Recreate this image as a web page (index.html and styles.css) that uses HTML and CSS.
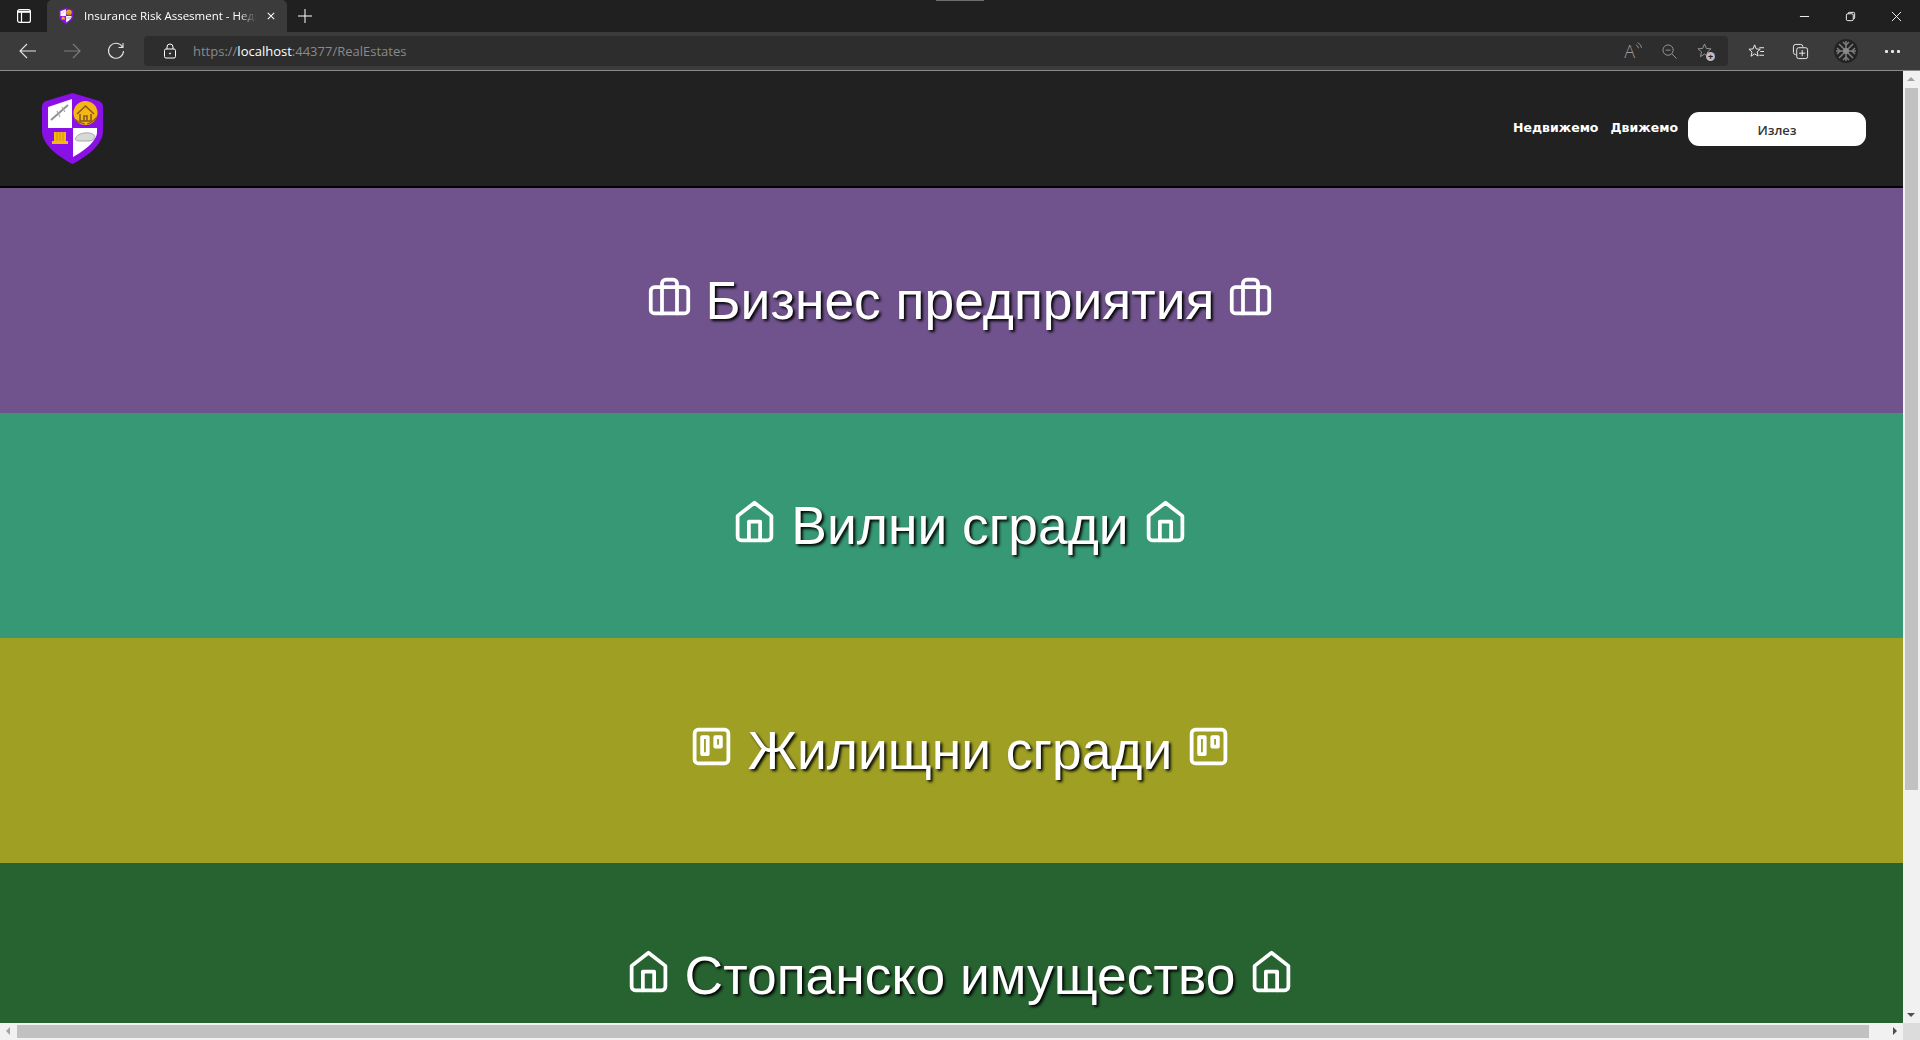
FILE: index.html
```html
<!DOCTYPE html>
<html lang="bg">
<head>
<meta charset="utf-8">
<title>Insurance Risk Assesment - Недвижимо</title>
<link rel="stylesheet" href="styles.css">
</head>
<body>
<svg class="defs" width="0" height="0" aria-hidden="true">
  <defs>
    <symbol id="i-brief" viewBox="0 0 24 24"><rect x="2" y="7" width="20" height="14" rx="2"/><path d="M16 21V5a2 2 0 0 0-2-2h-4a2 2 0 0 0-2 2v16"/></symbol>
    <symbol id="i-home" viewBox="0 0 24 24"><path d="M3 9l9-7 9 7v11a2 2 0 0 1-2 2H5a2 2 0 0 1-2-2z"/><path d="M9 22V12h6v10"/></symbol>
    <symbol id="i-trello" viewBox="0 0 24 24"><rect x="3" y="3" width="18" height="18" rx="2"/><rect x="7" y="7" width="3" height="9"/><rect x="14" y="7" width="3" height="5"/></symbol>
    <symbol id="i-shield" viewBox="0 0 61 71">
      <path d="M30.500 0 L57 8 Q61 9.500 61 14 V38 C61 52 44 64 30.500 71 C17 64 0 52 0 38 V14 Q0 9.500 4 8 Z" fill="#8a10e8"/>
      <path d="M30 6 V35 H6 V14 Z" fill="#fff"/>
      <path d="M31 35 H55 V39 C55 48 42 58 31 64 Z" fill="#fff"/>
      <circle cx="43.500" cy="20" r="12" fill="#f4b714"/>
      <path d="M35 21 L43.500 13 L52 21 M38 21 V28 H49 V21 M42 28 V23 H45 V28" fill="none" stroke="#8a5a18" stroke-width="1.600"/>
      <path d="M32 26 Q38 30 43 31 M45 31 Q50 30 55 24" fill="none" stroke="#8a5a18" stroke-width="1.200"/>
      <path d="M9 27 L26 12" stroke="#8f8f8f" stroke-width="1.800" fill="none"/>
      <path d="M15 18 L18 24 M20 14 L23 19" stroke="#aaa" stroke-width="1.200" fill="none"/>
      <path d="M12 39 H24 V48 H26 V51 H10 V48 H12 Z" fill="#f4b714"/>
      <path d="M15 39 V48 M18 39 V48 M21 39 V48" stroke="#c98f10" stroke-width=".8" fill="none"/>
      <path d="M33 46 Q35 41 42 40 Q50 39 53 43 Q53 47 48 48 H37 Q34 48 33 46 Z" fill="#d8d8d8" stroke="#9a9a9a" stroke-width=".8"/>
    </symbol>
  </defs>
</svg>
<div class="browser">
  <div class="tabstrip">
    <svg class="tab-panel" viewBox="0 0 14 14"><rect x=".6" y=".6" width="12.800" height="12.800" rx="2"/><path class="tab-panel-bar" d="M.6 2.800h12.800"/><path d="M4.500 3.500v10"/></svg>
    <div class="tab">
      <svg class="favicon"><use href="#i-shield"/></svg>
      <span class="tab-title">Insurance Risk Assesment - Недв</span>
      <svg class="tab-close" viewBox="0 0 10 10"><path d="M1 1l8 8M9 1l-8 8"/></svg>
    </div>
    <svg class="tab-new" viewBox="0 0 14 14"><path d="M7 0v14M0 7h14"/></svg>
    <div class="drag-mark"></div>
    <div class="window-btns">
      <svg class="win-icon" viewBox="0 0 12 12"><path d="M1 6h10"/></svg>
      <svg class="win-icon" viewBox="0 0 12 12"><rect x="1.500" y="3" width="7.500" height="7.500" rx="1.500"/><path d="M3.500 3V2.500a1 1 0 0 1 1-1h5a1 1 0 0 1 1 1v5a1 1 0 0 1-1 1H9"/></svg>
      <svg class="win-icon" viewBox="0 0 12 12"><path d="M1 1l10 10M11 1L1 11"/></svg>
    </div>
  </div>
  <div class="toolbar">
    <svg class="nav-icon" viewBox="0 0 18 18"><path d="M17 9H1M8 2L1 9l7 7"/></svg>
    <svg class="nav-icon nav-off" viewBox="0 0 18 18"><path d="M1 9h16M10 2l7 7-7 7"/></svg>
    <svg class="nav-icon" viewBox="0 0 18 18"><path d="M15.500 5A7.500 7.500 0 1 0 16.500 9M16 1v4.500h-4.500"/></svg>
    <div class="address">
      <svg class="lock" viewBox="0 0 14 16"><rect x="1.500" y="6" width="11" height="9" rx="1.500"/><path d="M4 6V4a3 3 0 0 1 6 0v2"/><circle cx="7" cy="10.500" r="0.600"/></svg>
      <span class="url"><span class="dim">https://</span>localhost<span class="dim">:44377/RealEstates</span></span>
      <div class="addr-tools">
        <span class="read-a">A<svg class="waves" viewBox="0 0 8 10"><path d="M1 3q2.500 1 3 4M3 .5q4 2 4.500 6"/></svg></span>
        <svg class="addr-icon" viewBox="0 0 16 16"><circle cx="6.500" cy="6.500" r="5.500"/><path d="M4 6.500h5M10.500 10.500l5 5"/></svg>
        <span class="fav-add">
          <svg class="addr-icon" viewBox="0 0 16 16"><path d="M8 1l2 4.800 5 .4-3.800 3.300 1.100 5L8 11.800 3.700 14.500l1.100-5L1 6.200l5-.4z"/></svg>
          <span class="plus-badge">+</span>
        </span>
      </div>
    </div>
    <div class="tools">
      <svg class="tool-icon" viewBox="0 0 18 18"><path d="M7 2l1.700 4.300 4.300.3-3.300 2.800 1 4.400L7 11.500 3.200 14l1.100-4.500L1 6.600l4.300-.3zM12 5h5M13 9h4M12 13h5"/></svg>
      <svg class="tool-icon" viewBox="0 0 18 18"><path d="M4 12.500A3 3 0 0 1 1.500 10V4A2.500 2.500 0 0 1 4 1.500h5A2.500 2.500 0 0 1 11.500 4"/><rect x="5" y="5" width="11.500" height="11.500" rx="2"/><path d="M10.800 7.500v6.500M7.500 10.800H14"/></svg>
      <svg class="avatar" viewBox="0 0 24 24"><circle cx="12" cy="12" r="12" fill="#232323"/><g stroke="#7d7d7d" stroke-width="1.500" fill="none"><path d="M12 2v20M2 12h20M5 5l14 14M19 5L5 19"/><path d="M9 3l3 3 3-3M9 21l3-3 3 3M3 9l3 3-3 3M21 9l-3 3 3 3"/></g><circle cx="12" cy="12" r="3" fill="#8a8a8a"/></svg>
      <span class="more"><i></i><i></i><i></i></span>
    </div>
  </div>
  <div class="viewport">
    <div class="page-row">
      <main class="page">
        <header class="site-header">
          <svg class="logo"><use href="#i-shield"/></svg>
          <nav class="site-nav">
            <a class="nav-link">Недвижемо</a>
            <a class="nav-link">Движемо</a>
            <button class="logout">Излез</button>
          </nav>
        </header>
        <section class="band band-purple">
          <svg class="band-icon"><use href="#i-brief"/></svg>
          <h2 class="band-title">Бизнес предприятия</h2>
          <svg class="band-icon"><use href="#i-brief"/></svg>
        </section>
        <section class="band band-green">
          <svg class="band-icon"><use href="#i-home"/></svg>
          <h2 class="band-title">Вилни сгради</h2>
          <svg class="band-icon"><use href="#i-home"/></svg>
        </section>
        <section class="band band-olive">
          <svg class="band-icon"><use href="#i-trello"/></svg>
          <h2 class="band-title">Жилищни сгради</h2>
          <svg class="band-icon"><use href="#i-trello"/></svg>
        </section>
        <section class="band band-forest">
          <svg class="band-icon"><use href="#i-home"/></svg>
          <h2 class="band-title">Стопанско имущество</h2>
          <svg class="band-icon"><use href="#i-home"/></svg>
        </section>
      </main>
      <div class="vscroll">
        <span class="arrow arrow-up"></span>
        <div class="vthumb"></div>
        <span class="arrow arrow-down"></span>
      </div>
    </div>
    <div class="hscroll-row">
      <div class="hscroll">
        <span class="arrow arrow-left"></span>
        <div class="hthumb"></div>
        <span class="arrow arrow-right"></span>
      </div>
      <div class="corner"></div>
    </div>
  </div>
</div>
</body>
</html>
```

FILE: styles.css
```css
* { box-sizing: border-box; }
html, body { margin: 0; height: 100%; overflow: hidden; }
body { font-family: "Open Sans", "Noto Sans", sans-serif; background: #202020; }
.defs { display: block; height: 0; }
svg { display: block; flex: none; }

.browser { height: 1040px; display: flex; flex-direction: column; }

.tabstrip { height: 32px; flex: none; background: #202020; display: flex; align-items: center; position: relative; }
.tab-panel { width: 14px; height: 14px; margin-left: 17px; margin-right: 16px; fill: none; stroke: #fff; stroke-width: 1.200; }
.tab-panel-bar { stroke-width: 2; }
.tab { width: 240px; height: 32px; background: #3b3b3b; border-radius: 5px 5px 0 0; display: flex; align-items: center; padding-left: 12px; color: #fff; }
.favicon { width: 14px; height: 16px; margin-right: 11px; }
.tab-title { width: 172px; padding-bottom: 2px; white-space: nowrap; font-size: 11.500px; -webkit-mask-image: linear-gradient(to right, #000 90%, transparent); mask-image: linear-gradient(to right, #000 90%, transparent); }
.tab-close { width: 8px; height: 8px; margin-left: 11px; fill: none; stroke: #fff; stroke-width: 1.300; }
.tab-new { width: 14px; height: 14px; margin-left: 11px; fill: none; stroke: #fff; stroke-width: 1; }
.drag-mark { position: absolute; left: 936px; top: 0; width: 48px; height: 1px; background: #6e6e6e; }
.window-btns { margin-left: auto; display: flex; gap: 35px; padding-right: 18px; }
.win-icon { width: 11px; height: 11px; fill: none; stroke: #fff; stroke-width: 1; }

.toolbar { height: 39px; flex: none; background: #3b3b3b; border-bottom: 1px solid #8c8c8c; display: flex; align-items: center; padding-left: 19px; }
.nav-icon { width: 18px; height: 18px; margin-right: 26px; fill: none; stroke: #e6e6e6; stroke-width: 1.100; }
.nav-off { stroke: #7d7d7d; }
.address { width: 1584px; height: 30px; margin-left: -7px; background: #2d2d2d; border-radius: 4px; display: flex; align-items: center; padding-left: 19px; }
.lock { width: 14px; height: 16px; fill: none; stroke: #fff; stroke-width: 1; }
.url { margin-left: 16px; font-size: 13px; color: #fff; }
.dim { color: #8a8a8a; }
.addr-tools { margin-left: auto; display: flex; align-items: center; gap: 20px; padding-right: 14px; color: #8f8f8f; }
.read-a { display: flex; font-size: 18px; font-weight: 300; line-height: 18px; color: #9a9a9a; }
.waves { width: 7px; height: 9px; fill: none; stroke: #9a9a9a; stroke-width: 1; }
.addr-icon { width: 15px; height: 15px; fill: none; stroke: #9a9a9a; stroke-width: 1; }
.fav-add { position: relative; display: block; width: 17px; height: 17px; }
.plus-badge { position: absolute; right: -1px; bottom: -1px; width: 9px; height: 9px; border-radius: 50%; background: #bdbdbd; color: #222; font-size: 9px; line-height: 9px; text-align: center; font-weight: 700; }
.tools { display: flex; align-items: center; margin-left: 20px; }
.tool-icon { width: 17px; height: 17px; margin-right: 27px; fill: none; stroke: #f2f2f2; stroke-width: 1; }
.tool-icon + .tool-icon { margin-right: 25px; }
.avatar { width: 24px; height: 24px; margin-right: 27px; }
.more { display: flex; gap: 3px; }
.more i { width: 3px; height: 3px; background: #e8e8e8; display: block; border-radius: 1px; }

.viewport { flex: 1; min-height: 0; display: flex; flex-direction: column; background: #f1f1f1; }
.page-row { flex: 1; min-height: 0; display: flex; }
.page { flex: 1; min-width: 0; overflow: hidden; background: #212121; }

.site-header { height: 117px; background: #212121; border-bottom: 2px solid #000; display: flex; align-items: flex-start; justify-content: space-between; padding: 22px 37px 0 42px; }
.logo { width: 61px; height: 71px; }
.site-nav { display: flex; align-items: center; margin-top: 19px; }
.nav-link { font-family: "DejaVu Sans", sans-serif; font-size: 12.500px; font-weight: 700; color: #fff; margin-right: 12px; padding-bottom: 4px; }
.logout { width: 178px; height: 34px; margin-left: -2px; border: 0; border-radius: 11px; background: #fff; color: #333; font-family: "Open Sans", sans-serif; font-size: 13px; font-weight: 600; padding: 2px 0 0; }

.band { width: 1920px; height: 225px; display: flex; align-items: center; justify-content: center; gap: 14px; }
.band-purple { background: #70538d; }
.band-green { background: #369875; }
.band-olive { background: #9fa023; }
.band-forest { background: #276330; }
.band-title { margin: 0; font-family: "Liberation Sans", Arial, sans-serif; font-weight: 400; font-size: 53.400px; line-height: 64px; color: #fff; text-shadow: 2px 2px 3px #000; }
.band-icon { width: 45px; height: 45px; margin-top: -8px; fill: none; stroke: #fff; stroke-width: 2; stroke-linecap: round; stroke-linejoin: round; }

.vscroll { width: 17px; flex: none; background: #f1f1f1; display: flex; flex-direction: column; align-items: center; position: relative; }
.vthumb { width: 13px; height: 702px; margin-top: 17px; background: #c1c1c1; }
.hscroll-row { height: 17px; flex: none; display: flex; }
.hscroll { flex: 1; background: #f1f1f1; position: relative; padding: 2px 34px 2px 17px; }
.hthumb { height: 13px; width: 1852px; background: #c1c1c1; }
.corner { width: 17px; background: #dcdcdc; }
.arrow { position: absolute; width: 0; height: 0; border-style: solid; border-color: transparent; }
.arrow-up { top: 6px; left: 4px; border-width: 0 4px 4px; border-bottom-color: #a3a3a3; }
.arrow-down { bottom: 6px; left: 4px; border-width: 4px 4px 0; border-top-color: #505050; }
.arrow-left { top: 4px; left: 6px; border-width: 4px 4px 4px 0; border-right-color: #a3a3a3; }
.arrow-right { top: 4px; right: 6px; border-width: 4px 0 4px 4px; border-left-color: #505050; }
```
